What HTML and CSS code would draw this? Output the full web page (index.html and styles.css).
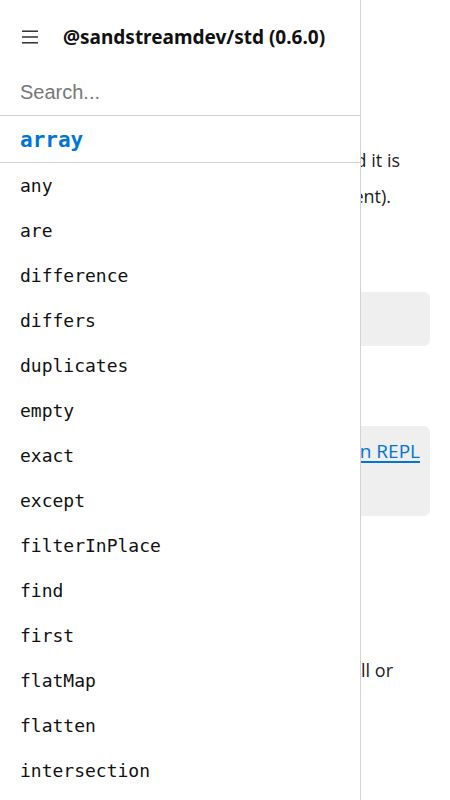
FILE: index.html
```html
<!DOCTYPE html>
<html lang="en">
<head>
<meta charset="utf-8">
<title>@sandstreamdev/std</title>
<link rel="stylesheet" href="styles.css">
</head>
<body>
<main class="content">
  <h2 class="heading">any</h2>
  <p class="desc">
    <span class="line l1">Checks if the given array is present and it is</span>
    <span class="line l2">not empty (contains at least one element).</span>
  </p>
  <div class="gap1"></div>
  <pre class="code box1"><code>any</code></pre>
  <div class="gap2"></div>
  <div class="code box2">
    <a class="repl" href="#">Try in REPL</a>
  </div>
  <div class="gap3"></div>
  <p class="desc2"><span class="line l3">How to check if an array is empty or null or</span></p>
</main>
<nav class="sidebar">
  <header class="side-head">
    <svg class="burger" width="16" height="14" viewBox="0 0 16 14"><rect x="0" y="0.5" width="16" height="1.4" fill="#222"/><rect x="0" y="6.3" width="16" height="1.4" fill="#222"/><rect x="0" y="12.1" width="16" height="1.4" fill="#222"/></svg>
    <span class="title">@sandstreamdev/std (0.6.0)</span>
  </header>
  <div class="search-row"><input class="search" type="text" placeholder="Search..."></div>
  <div class="section">array</div>
  <ul class="items">
    <li>any</li>
    <li>are</li>
    <li>difference</li>
    <li>differs</li>
    <li>duplicates</li>
    <li>empty</li>
    <li>exact</li>
    <li>except</li>
    <li>filterInPlace</li>
    <li>find</li>
    <li>first</li>
    <li>flatMap</li>
    <li>flatten</li>
    <li>intersection</li>
  </ul>
</nav>
</body>
</html>
```
FILE: styles.css
```css
html, body {
  margin: 0;
  padding: 0;
  background: #fff;
  overflow: hidden;
  height: 100%;
}
body {
  font-family: "Open Sans", "Noto Sans", sans-serif;
  color: #222;
}
.content {
  padding: 0 20px;
  font-size: 18px;
}
.heading {
  margin: 0;
  height: 142px;
  font-size: 28px;
}
.desc {
  margin: 0;
}
.line {
  display: block;
  white-space: nowrap;
  text-align: right;
  line-height: 36px;
}
.l1 { padding-right: 30px; }
.l2 { padding-right: 39px; }
.l3 { padding-right: 37px; }
.gap1 { height: 78px; }
.gap2 { height: 80px; }
.gap3 { height: 136px; }
.code {
  background: #efefef;
  border-radius: 6px;
  margin: 0;
  box-sizing: border-box;
}
.box1 {
  height: 54px;
  padding: 14px 16px;
  font-family: "DejaVu Sans Mono", monospace;
  font-size: 16px;
}
.box2 {
  height: 90px;
  padding: 12px 10px 0 0;
  text-align: right;
  line-height: 26px;
}
.repl {
  color: #0074d9;
  font-size: 19px;
  text-decoration: underline;
  text-decoration-thickness: 2px;
  text-underline-offset: 3px;
}
.desc2 {
  margin: 0;
}
.sidebar {
  position: fixed;
  top: 0;
  left: 0;
  width: 360px;
  height: 100vh;
  background: #fff;
  border-right: 1px solid #d3d3d3;
  overflow: hidden;
}
.side-head {
  display: flex;
  align-items: center;
  height: 70px;
  padding-left: 22px;
  gap: 25px;
  box-sizing: border-box;
}
.burger {
  flex: none;
  margin-top: 4px;
}
.title {
  font-family: "Noto Sans", sans-serif;
  font-weight: 700;
  font-size: 19px;
  color: #111;
  margin-top: 3px;
}
.search-row {
  border-bottom: 1px solid #d3d3d3;
  height: 45px;
}
.search {
  display: block;
  width: 100%;
  height: 45px;
  border: 0;
  outline: none;
  padding: 0 20px;
  box-sizing: border-box;
  font-family: "Liberation Sans", Arial, sans-serif;
  font-size: 20px;
  color: #222;
  background: transparent;
}
.search::placeholder {
  color: #777;
}
.section {
  height: 46px;
  line-height: 48px;
  padding-left: 20px;
  border-bottom: 1px solid #d3d3d3;
  font-family: "DejaVu Sans Mono", monospace;
  font-weight: 700;
  font-size: 21px;
  color: #0074d9;
}
.items {
  list-style: none;
  margin: 0;
  padding: 0;
}
.items li {
  height: 45px;
  line-height: 45px;
  padding-left: 20px;
  font-family: "DejaVu Sans Mono", monospace;
  font-size: 18px;
  color: #111;
}
```
